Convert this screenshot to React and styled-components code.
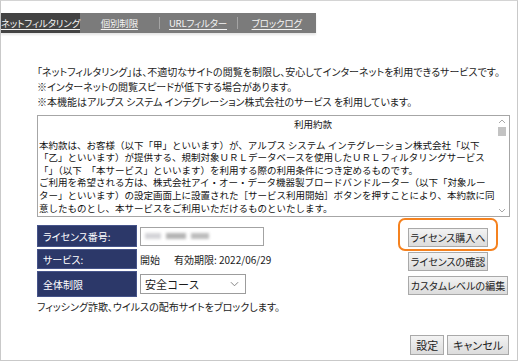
import { createGlobalStyle, styled } from "styled-components";

const GlobalStyle = createGlobalStyle`
  html, body {
    margin: 0;
    padding: 0;
    background: #fff;
  }
  body {
    font-family: "Noto Sans CJK JP", "Noto Sans", sans-serif;
    color: #1c1c1c;
  }
`;

const tabs = ["ネットフィルタリング", "個別制限", "URLフィルター", "ブロックログ"];

const terms = [
  "本約款は、お客様（以下「甲」といいます）が、アルプス システム インテグレーション株式会社「以下",
  "「乙」といいます）が提供する、規制対象ＵＲＬデータベースを使用したＵＲＬフィルタリングサービス",
  "「」（以下　「本サービス」といいます）を利用する際の利用条件につき定めるものです。",
  "ご利用を希望される方は、株式会社アイ・オー・データ機器製ブロードバンドルーター（以下「対象ルー",
  "ター」といいます）の設定画面上に設置された［サービス利用開始］ボタンを押すことにより、本約款に同",
  "意したものとし、本サービスをご利用いただけるものといたします。",
];

const App = () => {
  return (
    <>
      <GlobalStyle />
      <Frame>
        <TabBar>
          {tabs.map((tab, index) => (
            <Tab key={tab} $active={index === 0} $divider={index > 1}>
              {tab}
            </Tab>
          ))}
        </TabBar>

        <Content>
          <Intro>
            「ネットフィルタリング」は、不適切なサイトの閲覧を制限し、安心してインターネットを利用できるサービスです。
            <br />
            ※インターネットの閲覧スピードが低下する場合があります。
            <br />
            ※本機能はアルプス システム インテグレーション株式会社のサービス を利用しています。
          </Intro>

          <TermsBox>
            <TermsText>
              <TermsTitle>利用約款</TermsTitle>
              {terms.map((line, index) => (
                <TermsLine key={index}>{line}</TermsLine>
              ))}
            </TermsText>
            <ScrollTrack>
              <ScrollArrow viewBox="0 0 8 5">
                <polyline points="1,4 4,1 7,4" />
              </ScrollArrow>
              <ScrollThumb />
              <ScrollSpacer />
              <ScrollArrow viewBox="0 0 8 5">
                <polyline points="1,1 4,4 7,1" />
              </ScrollArrow>
            </ScrollTrack>
          </TermsBox>

          <Settings>
            <Rows>
              <Row>
                <Label $height={22}>ライセンス番号:</Label>
                <LicenseInput>
                  <Blur $w={16} $tone="#d4d4d8" />
                  <Blur $w={20} $tone="#b4b4b4" />
                  <Blur $w={18} $tone="#bcbcbc" />
                </LicenseInput>
              </Row>
              <Row>
                <Label $height={20}>サービス:</Label>
                <Value>開始</Value>
                <Value $gap={14}>有効期限: 2022/06/29</Value>
              </Row>
              <Row>
                <Label $height={26}>全体制限</Label>
                <Select>
                  <span>安全コース</span>
                  <Chevron viewBox="0 0 10 6">
                    <polyline points="1,1 5,5 9,1" />
                  </Chevron>
                </Select>
              </Row>
            </Rows>

            <Actions>
              <Highlight>
                <SideButton $width={80}>ライセンス購入へ</SideButton>
              </Highlight>
              <SideButton $width={80}>ライセンスの確認</SideButton>
              <SideButton $width={100}>カスタムレベルの編集</SideButton>
            </Actions>
          </Settings>

          <Note>フィッシング詐欺、ウイルスの配布サイトをブロックします。</Note>

          <Footer>
            <FooterButton>設定</FooterButton>
            <FooterButton>キャンセル</FooterButton>
          </Footer>
        </Content>
      </Frame>
    </>
  );
};

const Frame = styled.div`
  box-sizing: border-box;
  width: 518px;
  height: 361px;
  border: 1px solid #c9c9c9;
  border-top-color: #d4d4d4;
  display: flex;
  flex-direction: column;
`;

const TabBar = styled.nav`
  display: flex;
  width: 315px;
  height: 20px;
  margin-top: 12px;
  background: #7b7b7b;
  box-shadow: 0 2px 2px rgba(0, 0, 0, 0.1);
`;

const Tab = styled.a`
  position: relative;
  flex: 1;
  display: flex;
  align-items: center;
  justify-content: center;
  white-space: nowrap;
  font-size: 9.5px;
  letter-spacing: -0.2px;
  font-feature-settings: "palt";
  color: #f4f4f4;
  text-decoration: underline;
  text-underline-offset: 2px;
  background: ${(p) => (p.$active ? "#434343" : "transparent")};

  &::before {
    content: "";
    display: ${(p) => (p.$divider ? "block" : "none")};
    position: absolute;
    left: 0;
    top: 4px;
    bottom: 4px;
    width: 1px;
    background: #a4a4a4;
  }
`;

const Content = styled.div`
  flex: 1;
  display: flex;
  flex-direction: column;
  padding: 0 8px 0 36px;
`;

const Intro = styled.p`
  margin: 31px 0 0;
  font-size: 10px;
  line-height: 15px;
  font-feature-settings: "palt";
  white-space: nowrap;
`;

const TermsBox = styled.div`
  box-sizing: border-box;
  display: flex;
  width: 473px;
  height: 102px;
  margin-top: 6px;
  border: 1px solid #a6a6a6;
  overflow: hidden;
`;

const TermsText = styled.div`
  flex: 1;
  min-width: 0;
  padding: 2px 0 0 1px;
  font-size: 9.5px;
  line-height: 12.6px;
  color: #111;
`;

const TermsTitle = styled.div`
  text-align: center;
  padding-left: 92px;
  margin-bottom: 8px;
`;

const TermsLine = styled.div`
  white-space: nowrap;
`;

const ScrollTrack = styled.div`
  flex: 0 0 14px;
  display: flex;
  flex-direction: column;
  align-items: center;
  padding: 3px 0;
`;

const ScrollArrow = styled.svg`
  width: 8px;
  height: 5px;
  fill: none;
  stroke: #a8a8a8;
  stroke-width: 1;
`;

const ScrollThumb = styled.div`
  width: 8px;
  height: 9px;
  margin-top: 3px;
  background: #c3c3c3;
`;

const ScrollSpacer = styled.div`
  flex: 1;
`;

const Settings = styled.div`
  display: flex;
  margin-top: 6px;
`;

const Rows = styled.div`
  width: 371px;
  display: flex;
  flex-direction: column;
  gap: 2px;
  padding-top: 2px;
`;

const Row = styled.div`
  display: flex;
  align-items: center;
`;

const Label = styled.div`
  box-sizing: border-box;
  width: 100px;
  height: ${(p) => p.$height}px;
  display: flex;
  align-items: center;
  padding-left: 5px;
  margin-right: 3px;
  background: #2c3869;
  border: 1px solid #46548a;
  color: #fff;
  font-size: 10px;
  font-feature-settings: "palt";
`;

const LicenseInput = styled.div`
  box-sizing: border-box;
  width: 124px;
  height: 19px;
  display: flex;
  align-items: center;
  gap: 5px;
  padding-left: 4px;
  border: 1px solid #a3a3a3;
  background: #fff;
`;

const Blur = styled.span`
  width: ${(p) => p.$w}px;
  height: 6px;
  background: ${(p) => p.$tone};
  filter: blur(1.5px);
`;

const Value = styled.span`
  margin-left: ${(p) => p.$gap || 0}px;
  font-size: 10px;
  font-feature-settings: "palt";
`;

const Select = styled.div`
  box-sizing: border-box;
  width: 106px;
  height: 20px;
  display: flex;
  align-items: center;
  justify-content: space-between;
  padding: 0 6px 0 4px;
  border: 1px solid #9c9c9c;
  background: #fff;
  font-size: 11px;
`;

const Chevron = styled.svg`
  width: 9px;
  height: 6px;
  fill: none;
  stroke: #777;
  stroke-width: 1;
`;

const Actions = styled.div`
  display: flex;
  flex-direction: column;
  align-items: flex-start;
  gap: 5px;
`;

const Highlight = styled.div`
  position: relative;

  &::after {
    content: "";
    position: absolute;
    left: -10px;
    right: -10px;
    top: -5px;
    bottom: -4px;
    border: 2px solid #f5821f;
    border-radius: 7px;
  }
`;

const SideButton = styled.button`
  box-sizing: border-box;
  width: ${(p) => p.$width}px;
  height: 19px;
  padding: 0;
  border: 1px solid #a9a9a9;
  background: linear-gradient(#f3f3f3, #dcdcdc);
  font-family: inherit;
  font-size: 10px;
  color: #222;
  font-feature-settings: "palt";
`;

const Note = styled.p`
  margin: 3px 0 0;
  font-size: 10px;
  line-height: 14px;
  font-feature-settings: "palt";
`;

const Footer = styled.div`
  display: flex;
  justify-content: flex-end;
  gap: 3px;
  margin-top: 21px;
`;

const FooterButton = styled.button`
  height: 20px;
  padding: 0 5px;
  border: 1px solid #a9a9a9;
  background: linear-gradient(#f3f3f3, #dcdcdc);
  font-family: inherit;
  font-size: 11px;
  color: #222;
  font-feature-settings: "palt";
`;

export default App;
